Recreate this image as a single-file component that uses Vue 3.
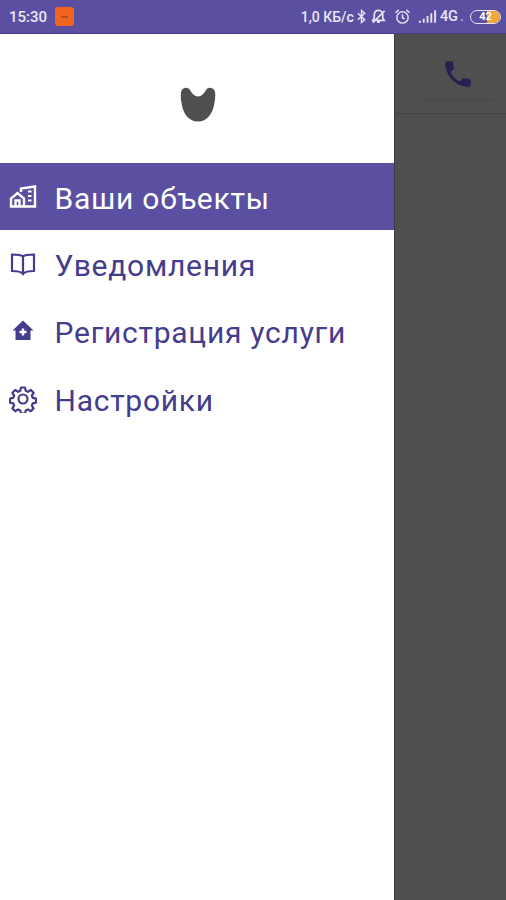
<script setup>
const items = [
  { label: 'Ваши объекты', icon: 'homes', active: true },
  { label: 'Уведомления', icon: 'book' },
  { label: 'Регистрация услуги', icon: 'addhome' },
  { label: 'Настройки', icon: 'gear' },
]
</script>

<template>
  <div class="screen">
    <header class="status">
      <div class="status-left">
        <span class="time">15:30</span>
        <span class="notif"><span class="notif-dot"></span></span>
      </div>
      <div class="status-right">
        <span class="speed">1,0 КБ/с</span>
        <svg class="si bt" viewBox="0 0 12 16" width="11" height="15"><path d="M2 4.500l7.500 7L6 14.500V1.500l3.500 3-7.500 7" fill="none" stroke="#e6e4f2" stroke-width="1.600"/></svg>
        <svg class="si mute" viewBox="0 0 18 18" width="17" height="17"><path d="M9 2.500c-3 0-4.500 2.200-4.500 5v3L3 13h12l-1.500-2.500v-3c0-2.800-1.500-5-4.500-5zM7.500 15h3M3 15.500L15.500 3" fill="none" stroke="#e6e4f2" stroke-width="1.800"/></svg>
        <svg class="si alarm" viewBox="0 0 18 18" width="17" height="17"><circle cx="9" cy="10" r="6" fill="none" stroke="#e6e4f2" stroke-width="1.500"/><path d="M9 6.500V10.500l2.500 1M1.500 5L5 2M16.500 5L13 2" fill="none" stroke="#e6e4f2" stroke-width="1.500"/></svg>
        <svg class="si signal" viewBox="0 0 19 13" width="18" height="13"><path d="M0 11h2v2H0zM4 9h2v4H4zM8 6h2v7H8zM12 3h2v10h-2zM16 0h2v13h-2z" fill="#e6e4f2"/></svg>
        <span class="net">4G</span>
        <span class="dot"></span>
        <span class="batt"><span class="batt-fill"></span><span class="batt-num">42</span></span>
      </div>
    </header>

    <div class="body">
      <nav class="drawer">
        <div class="logo-wrap">
          <svg viewBox="0 0 36 35" width="36" height="35">
            <path d="M1.500 3.500C3.500 0 8 0 10 3c2 3.500 4.500 6.500 8 6.500s6-3 8-6.500c2-3 6.500-3 8.500.5 1 2 1 6.500 0 12C33 27 27 34.500 18 34.500S3 27 1.500 16c-1-5.500-1-10.500 0-12.500z" fill="#4f4f4f"/>
          </svg>
        </div>
        <ul class="menu">
          <li v-for="item in items" :key="item.label" class="row" :class="{ active: item.active }">
            <span class="icon">
              <svg v-if="item.icon === 'homes'" viewBox="0 0 28 24" width="28" height="24" fill="none" stroke="currentColor" stroke-width="2.400">
                <path d="M2 21.500v-8l6.500-5.500 6.500 5.500v8zM6.500 21.500v-6h4v6M12 7V3.500l14-2v20h-10"/>
                <path d="M19 6.500h3.500M19 11h3.500M19 15.500h3.500" stroke-width="2"/>
              </svg>
              <svg v-else-if="item.icon === 'book'" viewBox="0 0 28 24" width="28" height="24" fill="none" stroke="currentColor" stroke-width="2.200">
                <path d="M14 4.500C12.500 3 9 2.500 3 2.500v16.500c6 0 9.500.5 11 3 1.500-2.500 5-3 11-3V2.500c-6 0-9.500.5-11 2zM14 4.500V22"/>
              </svg>
              <svg v-else-if="item.icon === 'addhome'" viewBox="0 0 28 24" width="28" height="24">
                <path d="M14 1.500L3.500 11.500h3V21h15v-9.500h3z" fill="currentColor"/>
                <path d="M14 9.500v7M10.500 13h7" stroke="#fff" stroke-width="2.400" fill="none"/>
              </svg>
              <svg v-else viewBox="0 0 28 28" width="28" height="28" fill="none" stroke="currentColor" stroke-width="2.200" stroke-linejoin="round">
                <path d="M12 2.500h4l.7 3.300 2.200 1 2.900-1.800 2.800 2.800-1.800 2.900 1 2.200 3.300.7v4l-3.300.7-1 2.200 1.800 2.900-2.800 2.800-2.900-1.800-2.200 1-.7 3.300h-4l-.7-3.300-2.200-1-2.900 1.800-2.800-2.800 1.800-2.900-1-2.200-3.300-.7v-4l3.300-.7 1-2.200-1.800-2.900 2.800-2.800 2.900 1.800 2.200-1z"/>
                <circle cx="14" cy="14" r="4.500"/>
              </svg>
            </span>
            <span class="label">{{ item.label }}</span>
          </li>
        </ul>
      </nav>

      <aside class="scrim">
        <div class="appbar">
          <div class="call">
            <svg viewBox="0 0 24 24" width="34" height="34"><path d="M6.620 10.790c1.440 2.830 3.760 5.140 6.590 6.590l2.200-2.200c.27-.27.67-.36 1.020-.24 1.120.37 2.330.57 3.570.57.550 0 1 .45 1 1V20c0 .55-.45 1-1 1-9.390 0-17-7.610-17-17 0-.55.45-1 1-1h3.500c.55 0 1 .45 1 1 0 1.250.2 2.450.57 3.570.11.350.03.740-.25 1.020l-2.200 2.200z" fill="#242150"/></svg>
          </div>
        </div>
      </aside>
    </div>
  </div>
</template>

<style>
html, body { margin: 0; background: #fff; }
</style>

<style scoped>
.screen {
  width: 506px;
  height: 900px;
  display: flex;
  flex-direction: column;
  overflow: hidden;
  font-family: Roboto, "Noto Sans", sans-serif;
}
.status {
  height: 34px;
  flex: none;
  box-sizing: border-box;
  background: #5b4fa2;
  border-bottom: 1px solid #453a85;
  display: flex;
  justify-content: space-between;
  align-items: center;
  padding: 0 5px 0 9px;
  color: #e9e7f4;
  font-weight: 500;
}
.status-left, .status-right { display: flex; align-items: center; }
.time { font-size: 15px; }
.notif {
  width: 19px;
  height: 19px;
  margin-left: 8px;
  border-radius: 3px;
  background: #f0641e;
  display: flex;
  align-items: center;
  justify-content: center;
}
.notif-dot { width: 7px; height: 2px; background: #b9501f; }
.speed { font-size: 14px; margin-right: 2px; white-space: nowrap; }
.si { flex: none; }
.mute { margin-left: 3px; }
.alarm { margin-left: 7px; }
.signal { margin-left: 8px; }
.net { margin-left: 3px; font-size: 14.500px; }
.dot { width: 2px; height: 2px; margin: 7px 0 0 3px; background: #9d96c9; }
.batt {
  position: relative;
  width: 31px;
  height: 14px;
  margin-left: 7px;
  box-sizing: border-box;
  border: 1.500px solid #e6e4f2;
  border-radius: 7px;
  overflow: hidden;
  display: flex;
  align-items: center;
  justify-content: center;
}
.batt-fill {
  position: absolute;
  right: 0;
  top: 0;
  bottom: 0;
  width: 13px;
  background: #f2a93b;
}
.batt-num { position: relative; font-size: 11px; font-weight: 700; color: #fff; }
.body { flex: 1; display: flex; min-height: 0; }
.drawer {
  width: 395px;
  box-sizing: border-box;
  flex: none;
  background: #fff;
  border-right: 1px solid #3c3c3c;
}
.logo-wrap {
  height: 129px;
  box-sizing: border-box;
  padding-top: 53px;
  padding-left: 180px;
}
.logo-wrap svg { display: block; }
.menu { list-style: none; margin: 0; padding: 0; }
.row {
  height: 67.330px;
  display: flex;
  align-items: center;
  color: #443c8c;
}
.row.active {
  background: #5b4fa2;
  color: #fff;
}
.icon {
  width: 28px;
  margin-left: 9px;
  margin-right: 17.500px;
  display: flex;
  align-items: center;
  justify-content: center;
  flex: none;
}
.icon svg { display: block; }
.label {
  font-size: 30px;
  letter-spacing: 0.75px;
  white-space: nowrap;
  padding-top: 3px;
}
.scrim { flex: 1; background: #4f4f4f; }
.appbar {
  height: 80px;
  box-sizing: border-box;
  border-bottom: 1px solid #424242;
  display: flex;
  justify-content: center;
}
.call {
  width: 72px;
  height: 67px;
  margin-right: -15px;
  box-sizing: border-box;
  border-bottom: 1px solid #474747;
  display: flex;
  align-items: center;
  justify-content: center;
  padding-top: 14px;
}
</style>
